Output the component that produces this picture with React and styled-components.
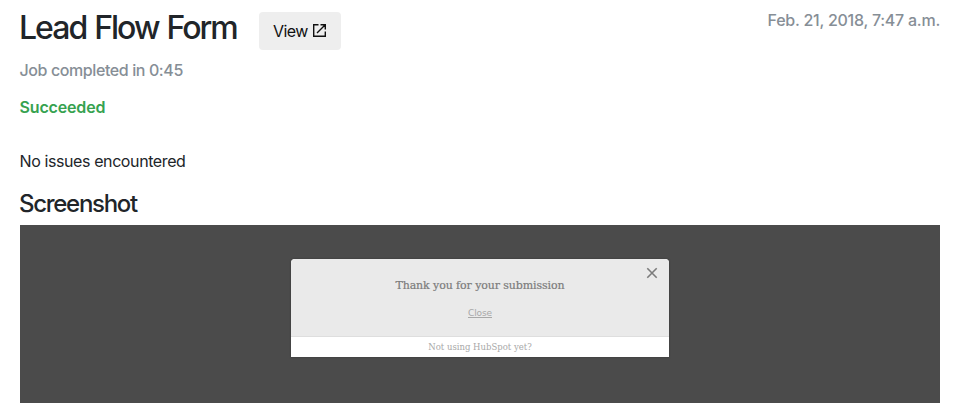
import styled, { createGlobalStyle } from "styled-components"

export default function App(){

    return(
        <>
            <GlobalStyle />
            <PageStyle>
                <Header>
                    <Title>Lead Flow Form</Title>
                    <ViewButton>
                        View
                        <OpenIcon />
                    </ViewButton>
                    <JobDate>Feb. 21, 2018, 7:47 a.m.</JobDate>
                </Header>
                <Duration>Job completed in 0:45</Duration>
                <Status>Succeeded</Status>
                <Issues>No issues encountered</Issues>
                <Subtitle>Screenshot</Subtitle>
                <Preview>
                    <LeadFlow />
                </Preview>
            </PageStyle>
        </>
    )
}

function OpenIcon(){
    return(
        <svg width="13" height="13" viewBox="0 0 13 13" fill="none" stroke="#111" strokeWidth="1.4">
            <path d="M5.5 .7H.7v11.6h11.6V7.5M7.5 .7h4.8V5.5M12 1L4 9" />
        </svg>
    )
}

function LeadFlow(){
    return(
        <Modal>
            <ModalBody>
                <CloseIcon width="12" height="12" viewBox="0 0 12 12" stroke="#7c7c7c" strokeWidth="1.6">
                    <path d="M1.3 1.3l9.4 9.4M10.7 1.3l-9.4 9.4" />
                </CloseIcon>
                <Thanks>Thank you for your submission</Thanks>
                <CloseLink>Close</CloseLink>
            </ModalBody>
            <ModalFooter>
                <span>Not using HubSpot yet?</span>
            </ModalFooter>
        </Modal>
    )
}

const GlobalStyle = createGlobalStyle`
    body {
        margin: 0;
        background-color: white;
        color: #212529;
        font-family: Inter, "Liberation Sans", sans-serif;
        font-size: 16px;
        line-height: 24px;
        overflow: hidden;
    }

    h1, h2, p {
        margin: 0;
    }
`

const PageStyle = styled.div`

    width: 920px;
    height: 395px;
    padding: 8px 0 0 20px;

    display: flex;
    flex-direction: column;
`

const Header = styled.div`

    height: 42px;

    display: flex;
    align-items: flex-start;
`

const Title = styled.h1`

    width: 240px;
    margin-left: -1px;

    font-size: 32px;
    font-weight: 550;
    line-height: 39px;
    letter-spacing: -2px;
    word-spacing: 1.5px;
    white-space: nowrap;
`

const ViewButton = styled.button`

    width: 82px;
    height: 38px;
    margin-top: 4px;
    padding: 0 15px 0 14px;
    border: none;
    border-radius: 4px;

    display: flex;
    align-items: center;
    justify-content: space-between;

    background-color: #eee;
    color: #111;
    font-family: inherit;
    font-size: 16px;
    letter-spacing: -0.6px;

    svg {
        margin-bottom: 2px;
    }
`

const JobDate = styled.p`

    margin-left: auto;

    color: #868e96;
    font-weight: 500;
    letter-spacing: -0.25px;
`

const Duration = styled.p`

    margin-top: 8px;
    margin-left: -0.5px;

    color: #868e96;
    font-weight: 450;
    letter-spacing: -0.4px;
`

const Status = styled.p`

    margin-top: 13px;
    margin-left: -0.5px;

    color: #36a24f;
    font-weight: 600;
    letter-spacing: -0.15px;
`

const Issues = styled.p`

    margin-top: 30px;
    margin-left: -0.5px;

    letter-spacing: -0.4px;
`

const Subtitle = styled.h2`

    margin-top: 17px;
    margin-left: -1px;

    font-size: 24px;
    font-weight: 550;
    line-height: 28px;
    letter-spacing: -1.3px;
`

const Preview = styled.div`

    flex: 1;
    margin-top: 7px;
    padding-top: 34px;

    display: flex;
    align-items: flex-start;
    justify-content: center;

    background-color: #4b4b4b;
    font-family: "DejaVu Serif", serif;
`

const Modal = styled.div`

    width: 378px;
    height: 98px;

    border-radius: 4px 4px 0 0;
    overflow: hidden;
    box-shadow: 0 0 2px #333;

    background-color: white;
`

const ModalBody = styled.div`

    position: relative;
    height: 78px;
    box-sizing: border-box;
    padding-top: 18px;
    border-bottom: 1px solid #dedede;

    display: flex;
    flex-direction: column;
    align-items: center;

    background-color: #eaeaea;
`

const CloseIcon = styled.svg`

    position: absolute;
    top: 7.5px;
    right: 11px;
`

const Thanks = styled.p`

    color: #7c7c7c;
    font-size: 11px;
    line-height: 18px;
    letter-spacing: -0.1px;
    -webkit-text-stroke: 0.2px #7c7c7c;
`

const CloseLink = styled.span`

    margin-top: 10px;

    color: #a8a8a8;
    font-family: "DejaVu Sans", sans-serif;
    font-size: 9px;
    line-height: 16px;
    letter-spacing: -0.1px;
    text-decoration: underline;
`

const ModalFooter = styled.div`

    height: 20px;

    color: #a8a8a8;
    font-size: 8.5px;
    line-height: 21px;
    text-align: center;
`
